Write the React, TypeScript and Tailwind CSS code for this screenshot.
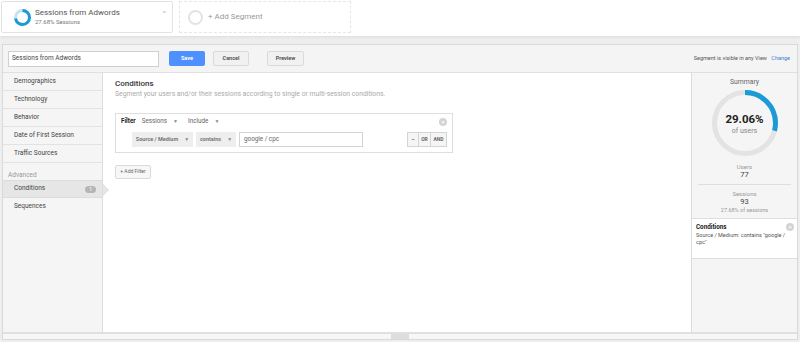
import React from "react";

const navItems = ["Demographics", "Technology", "Behavior", "Date of First Session", "Traffic Sources"];

const Caret = () => <span className="ml-[6px] text-[5px] text-[#888]">▼</span>;

const Donut = ({ size, stroke, pct, track, color }: { size: number; stroke: number; pct: number; track: string; color: string }) => {
  const r = (size - stroke) / 2;
  const c = 2 * Math.PI * r;
  return (
    <svg width={size} height={size} viewBox={`0 0 ${size} ${size}`} className="-rotate-90">
      <circle cx={size / 2} cy={size / 2} r={r} fill="none" stroke={track} strokeWidth={stroke} />
      <circle
        cx={size / 2}
        cy={size / 2}
        r={r}
        fill="none"
        stroke={color}
        strokeWidth={stroke}
        strokeDasharray={`${(c * pct) / 100} ${c}`}
      />
    </svg>
  );
};

const CloseDot = () => (
  <span className="flex h-[8px] w-[8px] items-center justify-center rounded-full bg-[#d4d4d4] text-[6px] leading-none text-white">×</span>
);

export default function App() {
  return (
    <div className="h-[342px] w-[800px] overflow-hidden bg-[#eeeeee] font-['Roboto',sans-serif] text-[#444]">
      {/* segment bar */}
      <div className="flex h-[36px] gap-[6px] bg-white pl-px pt-px shadow-[0_1px_3px_rgba(0,0,0,0.08)]">
        <div className="relative flex h-[32px] w-[172px] items-center rounded-[2px] border border-[#e3e3e3] pl-[12px]">
          <Donut size={17} stroke={3} pct={72} track="#c5e4f3" color="#1a9ad6" />
          <div className="ml-[4px] leading-none">
            <div className="text-[8px] text-[#555]">Sessions from Adwords</div>
            <div className="mt-[2px] text-[6px] text-[#777]">27.68% Sessions</div>
          </div>
          <span className="absolute right-[4px] top-[3px] text-[8px] text-[#bbb]">⌄</span>
        </div>
        <div className="flex h-[32px] w-[172px] items-center border border-dashed border-[#e6e6e6] pl-[8px]">
          <span className="h-[15px] w-[15px] rounded-full border-[2px] border-[#e2e2e2]" />
          <span className="ml-[5px] text-[8px] text-[#999]">+ Add Segment</span>
        </div>
      </div>

      {/* editor panel */}
      <div className="mx-[2px] mt-[8px] flex h-[296px] flex-col border border-[#d9d9d9] bg-white">
        <div className="flex h-[28px] shrink-0 items-center border-b border-[#e0e0e0] bg-[#f4f4f4] px-[5px]">
          <div className="flex h-[16px] w-[151px] items-center border border-[#cfcfcf] bg-white px-[3px] text-[6.5px] text-[#444]">
            Sessions from Adwords
          </div>
          <button className="ml-[10px] h-[15px] w-[36px] rounded-[2px] bg-[#4d90fe] text-[5.5px] font-bold text-white">Save</button>
          <button className="ml-[8px] h-[15px] w-[36px] rounded-[2px] border border-[#dadada] bg-[#f1f1f1] text-[5.5px] font-bold text-[#555]">Cancel</button>
          <button className="ml-[18px] h-[15px] w-[37px] rounded-[2px] border border-[#dadada] bg-[#f1f1f1] text-[5.5px] font-bold text-[#555]">Preview</button>
          <div className="ml-auto pr-[2px] text-[5.5px] text-[#555]">
            Segment is visible in any View <span className="ml-[3px] text-[#3b7dd8]">Change</span>
          </div>
        </div>

        <div className="flex min-h-0 flex-1">
          {/* nav */}
          <div className="w-[100px] shrink-0 border-r border-[#dcdcdc] bg-[#f5f5f5]">
            {navItems.map((n) => (
              <div key={n} className="flex h-[18px] items-center border-b border-[#e2e2e2] pl-[11px] text-[6.5px] text-[#444]">
                {n}
              </div>
            ))}
            <div className="pl-[5px] pt-[8px] text-[6.5px] leading-[9px] text-[#999]">Advanced</div>
            <div className="relative flex h-[18px] items-center justify-between border-y border-[#dcdcdc] bg-[#e6e6e6] pl-[11px] pr-[6px] text-[6.5px] text-[#444]">
              Conditions
              <span className="rounded-full bg-[#b5b5b5] px-[4px] text-[5.5px] leading-[7px] text-white">1</span>
              <span className="absolute right-[-7px] top-[3px] h-0 w-0 border-y-[6px] border-l-[6px] border-y-transparent border-l-[#dcdcdc]" />
              <span className="absolute right-[-6px] top-[4px] h-0 w-0 border-y-[5px] border-l-[5px] border-y-transparent border-l-[#e6e6e6]" />
            </div>
            <div className="flex h-[18px] items-center pl-[11px] text-[6.5px] text-[#444]">Sequences</div>
          </div>

          {/* content */}
          <div className="min-w-0 flex-1 pl-[12px] pt-[5px]">
            <div className="text-[8px] font-medium leading-[11px] text-[#333]">Conditions</div>
            <div className="text-[6.8px] leading-[10px] text-[#aaa]">
              Segment your users and/or their sessions according to single or multi-session conditions.
            </div>
            <div className="mt-[14px] w-[338px] border border-[#dedede] px-[5px] pb-[5px] pt-[3px]">
              <div className="flex h-[10px] items-center text-[6.3px]">
                <span className="font-bold text-[#222]">Filter</span>
                <span className="ml-[6px] text-[#666]">Sessions</span>
                <Caret />
                <span className="ml-[10px] text-[#666]">Include</span>
                <Caret />
                <span className="ml-auto">
                  <CloseDot />
                </span>
              </div>
              <div className="mt-[5px] flex items-center pl-[11px] text-[5.5px]">
                <div className="flex h-[15px] w-[61px] items-center justify-center whitespace-nowrap bg-[#eeeeee] font-bold text-[#777]">
                  Source / Medium <Caret />
                </div>
                <div className="ml-[3px] flex h-[15px] w-[40px] items-center justify-center whitespace-nowrap bg-[#eeeeee] font-bold text-[#777]">
                  contains <Caret />
                </div>
                <div className="ml-[3px] flex h-[15px] w-[124px] items-center border border-[#d4d4d4] px-[4px] text-[6.3px] text-[#666]">
                  google / cpc
                </div>
                <div className="ml-auto flex h-[15px] items-stretch border border-[#d4d4d4] bg-[#f5f5f5] text-[5px] font-bold text-[#666]">
                  <span className="flex w-[11px] items-center justify-center border-r border-[#d4d4d4]">–</span>
                  <span className="flex w-[12px] items-center justify-center border-r border-[#d4d4d4]">OR</span>
                  <span className="flex w-[15px] items-center justify-center">AND</span>
                </div>
              </div>
            </div>
            <button className="mt-[12px] h-[14px] w-[36px] rounded-[2px] border border-[#dadada] bg-[#f7f7f7] text-[5px] text-[#666]">
              + Add Filter
            </button>
          </div>

          {/* summary */}
          <div className="w-[106px] shrink-0 border-l border-[#dcdcdc] bg-[#f5f5f5]">
            <div className="pt-[4px] text-center text-[6.8px] text-[#666]">Summary</div>
            <div className="relative mx-auto mt-[3px] h-[66px] w-[66px]">
              <Donut size={66} stroke={5} pct={29.06} track="#e3e3e3" color="#1a9ad6" />
              <div className="absolute inset-0 flex flex-col items-center justify-center pt-[2px]">
                <div className="text-[11.5px] font-bold leading-[13px] text-[#222]">29.06%</div>
                <div className="text-[7px] leading-[10px] text-[#888]">of users</div>
              </div>
            </div>
            <div className="mx-[6px] mt-[7px] border-b border-[#dedede] pb-[5px] text-center leading-[8px]">
              <div className="text-[6px] text-[#999]">Users</div>
              <div className="text-[7.5px] text-[#444]">77</div>
            </div>
            <div className="mt-[5px] border-b border-[#dedede] pb-[4px] text-center leading-[8px]">
              <div className="text-[6px] text-[#999]">Sessions</div>
              <div className="text-[7.5px] text-[#444]">93</div>
              <div className="text-[5.5px] text-[#999]">27.68% of sessions</div>
            </div>
            <div className="relative h-[40px] border-b border-[#dedede] bg-white px-[4px] pt-[4px]">
              <div className="text-[6.3px] font-bold leading-[9px] text-[#222]">Conditions</div>
              <div className="text-[5.5px] leading-[7px] text-[#555]">Source / Medium: contains "google / cpc"</div>
              <span className="absolute right-[3px] top-[4px]">
                <CloseDot />
              </span>
            </div>
          </div>
        </div>

        {/* bottom scroll strip */}
        <div className="h-[2px] shrink-0 bg-[#e0e0e0]" />
        <div className="flex h-[5px] shrink-0 justify-center bg-[#f7f7f7]">
          <div className="h-full w-[18px] bg-[#dedede]" />
        </div>
      </div>
    </div>
  );
}
